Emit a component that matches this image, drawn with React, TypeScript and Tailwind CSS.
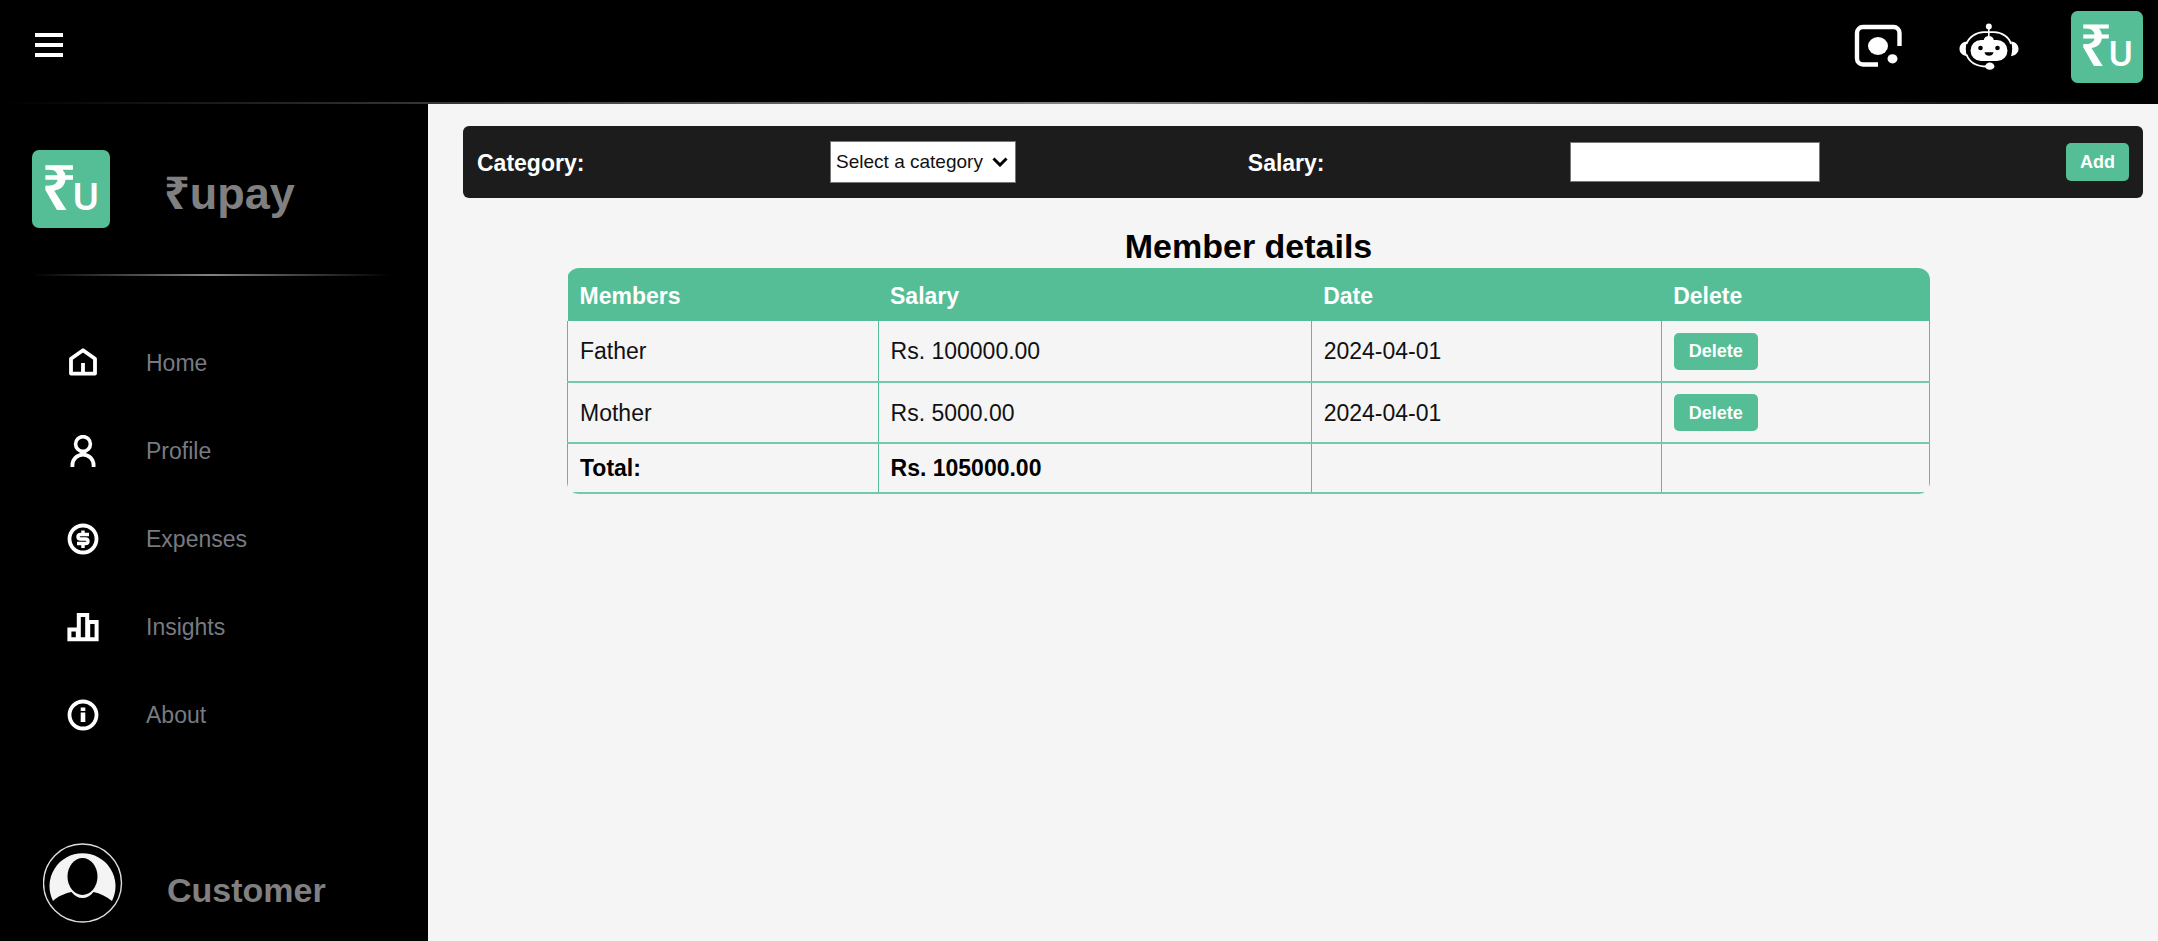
import type { ReactNode } from 'react';

const members = [
  { name: 'Father', salary: 'Rs. 100000.00', date: '2024-04-01' },
  { name: 'Mother', salary: 'Rs. 5000.00', date: '2024-04-01' },
];

function Logo({ className }: { className: string }) {
  return (
    <svg viewBox="0 0 78 78" className={className} overflow="visible" role="img" aria-label="Rupay logo">
      <rect width="78" height="78" rx="7" fill="#55be96" />
      <text x="9" y="60" fontSize="63" fontWeight="600" fill="#fff" fontFamily="'Noto Sans', sans-serif">
        ₹
        <tspan dx="-5" fontSize="37" fontWeight="600">U</tspan>
      </text>
    </svg>
  );
}

function NavIcon({ children }: { children: ReactNode }) {
  return (
    <svg viewBox="0 0 32 32" className="size-8 shrink-0" fill="none" stroke="#fff" strokeWidth="3.8" aria-hidden="true">
      {children}
    </svg>
  );
}

const navItems = [
  {
    label: 'Home',
    icon: (
      <NavIcon>
        <path d="M4 26.600V11.800L16 3.200l12 8.600v14.800zM16 26V16" strokeLinejoin="round" />
      </NavIcon>
    ),
  },
  {
    label: 'Profile',
    icon: (
      <NavIcon>
        <circle cx="16" cy="9" r="7.4" strokeWidth="3.6" />
        <path d="M5.400 32v-1.800a10.600 10.600 0 0 1 21.200 0V32" />
      </NavIcon>
    ),
  },
  {
    label: 'Expenses',
    icon: (
      <NavIcon>
        <circle cx="16" cy="16" r="13.500" />
        <path d="M22 11.500h-8.500q-2.500 0-2.500 2.200t2.500 2.300h5q2.500 0 2.500 2.200t-2.500 2.300H10M16 7.500v4M16 20.500v4.500" strokeWidth="3.400" />
      </NavIcon>
    ),
  },
  {
    label: 'Insights',
    icon: (
      <NavIcon>
        <path d="M2.400 18.600h8.400v9.600H2.400zM11.800 4h8.400v24.200h-8.400zM21.200 11h8.400v17.200h-8.400z" strokeWidth="4" />
      </NavIcon>
    ),
  },
  {
    label: 'About',
    icon: (
      <NavIcon>
        <circle cx="16" cy="16" r="13.500" />
        <path d="M16 8.500v3.500M16 13.500v9.500" strokeWidth="4.600" />
      </NavIcon>
    ),
  },
];

function LensIcon() {
  return (
    <svg viewBox="0 0 48 44" className="h-11 w-12" fill="none" aria-hidden="true">
      <path d="M24 40.500H9a6 6 0 0 1-6-6V9a6 6 0 0 1 6-6h30.500a6 6 0 0 1 6 6v13" stroke="#fff" strokeWidth="4.400" />
      <ellipse cx="24" cy="22" rx="10" ry="9" fill="#fff" />
      <ellipse cx="38.500" cy="34.800" rx="5" ry="4.600" fill="#fff" />
    </svg>
  );
}

function RobotIcon() {
  return (
    <svg viewBox="0 0 60 48" className="h-12 w-15" fill="#fff" aria-hidden="true">
      <circle cx="29.800" cy="3.500" r="3" />
      <path d="M29.800 5v10" stroke="#fff" strokeWidth="1.600" />
      <path d="M7.500 21C10 14 17 9.400 25 9.200h10C43 9.400 50 14 52 21M7.500 31.500C10 38.500 17 43.500 28 43.500" fill="none" stroke="#fff" strokeWidth="1.800" />
      <path d="M24.800 17c.500-5.500 9.500-5.500 10 0H38a10.500 10.500 0 0 1 0 21H22a10.500 10.500 0 0 1 0-21z" />
      <path d="M8 18.500C3 19 .500 22 .500 25.800S3 32.500 8 33.200C6.400 28 6.400 23.500 8 18.500zM52 18.500c5 .500 7.500 3.500 7.500 7.300S57 32.500 52 33.200c1.600-5.200 1.600-9.700 0-14.700z" />
      <ellipse cx="30.800" cy="43.200" rx="4.600" ry="3.600" />
      <circle cx="21.500" cy="25" r="2.300" fill="#000" />
      <circle cx="38.500" cy="25" r="2.300" fill="#000" />
      <path d="M25.500 29.200h9c-.500 4.800-8.500 4.800-9 0z" fill="#000" />
    </svg>
  );
}

function Avatar() {
  return (
    <svg viewBox="0 0 80 80" className="size-20 shrink-0" aria-hidden="true">
      <circle cx="39.500" cy="40" r="39" fill="#000" stroke="#ddd" strokeWidth="1.400" />
      <path d="M10 58a33 33 0 1 1 59 0c-6-5-12-7.500-18.500-9-3.500 4-6.500 6-11 6s-7.500-2-11-6C22 50.500 15 53 10 58z" fill="#f4f4f4" />
      <ellipse cx="39.500" cy="33.500" rx="15" ry="18.500" fill="#000" />
    </svg>
  );
}

export default function App() {
  return (
    <div className="flex min-h-screen flex-col bg-[#f5f5f5] font-['Liberation_Sans',Arial,sans-serif] text-[23px] leading-7 text-[#111]">
      <header className="bg-black">
        <div className="flex h-[102px] items-start justify-between pt-[11px] pr-[15px] pl-[35px]">
          <button type="button" aria-label="Toggle menu" className="mt-[22px] flex w-7 flex-col gap-[6px]">
            <span className="h-1 w-full bg-white" />
            <span className="h-1 w-full bg-white" />
            <span className="h-1 w-full bg-white" />
          </button>
          <div className="flex items-start">
            <button type="button" aria-label="Scan" className="mt-[13px] mr-[57px]">
              <LensIcon />
            </button>
            <button type="button" aria-label="Assistant" className="mt-3 mr-[52px]">
              <RobotIcon />
            </button>
            <Logo className="size-18" />
          </div>
        </div>
        <div className="h-[2px] bg-linear-to-r/srgb from-black via-[#80858a] to-black" />
      </header>

      <div className="flex flex-1">
        <aside className="flex w-[428px] shrink-0 flex-col bg-black pb-[18px]">
          <div className="flex items-center gap-[54px] pt-[46px] pl-8">
            <Logo className="size-[78px]" />
            <span className="pt-2 text-[45px] leading-[52px] font-bold text-[#808080]">
              <span className="font-['Noto_Sans',sans-serif]">₹</span>upay
            </span>
          </div>
          <div className="mt-[46px] mr-[38px] ml-8 h-[2px] bg-linear-to-r/srgb from-black via-[#80858a] to-black" />
          <nav className="mt-[71px] flex flex-col gap-14 pl-[67px]">
            {navItems.map((item) => (
              <a key={item.label} href="#" className="flex h-8 items-center gap-[47px] text-[#777b81]">
                {item.icon}
                {item.label}
              </a>
            ))}
          </nav>
          <div className="mt-auto flex items-center gap-11 pl-[43px]">
            <Avatar />
            <span className="pt-[14px] text-[34px] leading-10 font-bold text-[#808080]">Customer</span>
          </div>
        </aside>

        <main className="flex-1 pt-[22px]">
          <form
            className="mr-[15px] ml-[35px] flex h-18 items-center justify-between rounded-md bg-[#1c1c1c] px-[14px] font-bold text-white"
            onSubmit={(event) => event.preventDefault()}
          >
            <label htmlFor="category" className="pt-px">Category:</label>
            <div className="relative ml-[14px]">
              <select
                id="category"
                className="block h-[42px] w-[186px] appearance-none border border-[#767676] bg-white pl-[5px] text-[19px] font-normal text-[#111]"
              >
                <option>Select a category</option>
                <option>Father</option>
                <option>Mother</option>
              </select>
              <svg
                viewBox="0 0 16 10"
                className="pointer-events-none absolute top-4 right-2 h-[10px] w-4"
                fill="none"
                stroke="#000"
                strokeWidth="3"
                aria-hidden="true"
              >
                <path d="M1.500 1.500 8 8l6.500-6.500" />
              </svg>
            </div>
            <label htmlFor="salary" className="pt-px">Salary:</label>
            <input
              id="salary"
              type="text"
              className="ml-[14px] h-10 w-[250px] border border-[#767676] bg-white px-2 font-normal text-black"
            />
            <button type="submit" className="ml-[14px] h-[38px] rounded-[5px] bg-[#55be96] px-[14px] text-[18px] font-bold">
              Add
            </button>
          </form>

          <section className="mt-7 pr-[228px] pl-[139px]">
            <h1 className="pb-[2px] text-center text-[34px] leading-10 font-bold text-black">Member details</h1>
            <div className="overflow-hidden rounded-xl">
              <table className="w-full table-fixed border-collapse text-left [&_td]:border-x [&_td]:border-b-2 [&_td]:border-x-[#55be96] [&_td]:border-b-[#74c9a8] [&_td]:px-3">
                <colgroup>
                  <col className="w-[22.8%]" />
                  <col className="w-[31.8%]" />
                  <col className="w-[25.7%]" />
                  <col className="w-[19.7%]" />
                </colgroup>
                <thead>
                  <tr className="h-[53px] bg-[#55be96] text-white">
                    <th className="px-3 pt-[2px]">Members</th>
                    <th className="px-3 pt-[2px]">Salary</th>
                    <th className="px-3 pt-[2px]">Date</th>
                    <th className="px-3 pt-[2px]">Delete</th>
                  </tr>
                </thead>
                <tbody>
                  {members.map((member) => (
                    <tr key={member.name} className="h-[61px]">
                      <td>{member.name}</td>
                      <td>{member.salary}</td>
                      <td>{member.date}</td>
                      <td>
                        <button
                          type="button"
                          className="block h-[37px] rounded-[5px] bg-[#55be96] px-[15px] text-[18px] font-bold text-white"
                        >
                          Delete
                        </button>
                      </td>
                    </tr>
                  ))}
                </tbody>
                <tfoot>
                  <tr className="h-[50px] font-bold text-black">
                    <td>Total:</td>
                    <td>Rs. 105000.00</td>
                    <td />
                    <td />
                  </tr>
                </tfoot>
              </table>
            </div>
          </section>
        </main>
      </div>
    </div>
  );
}
